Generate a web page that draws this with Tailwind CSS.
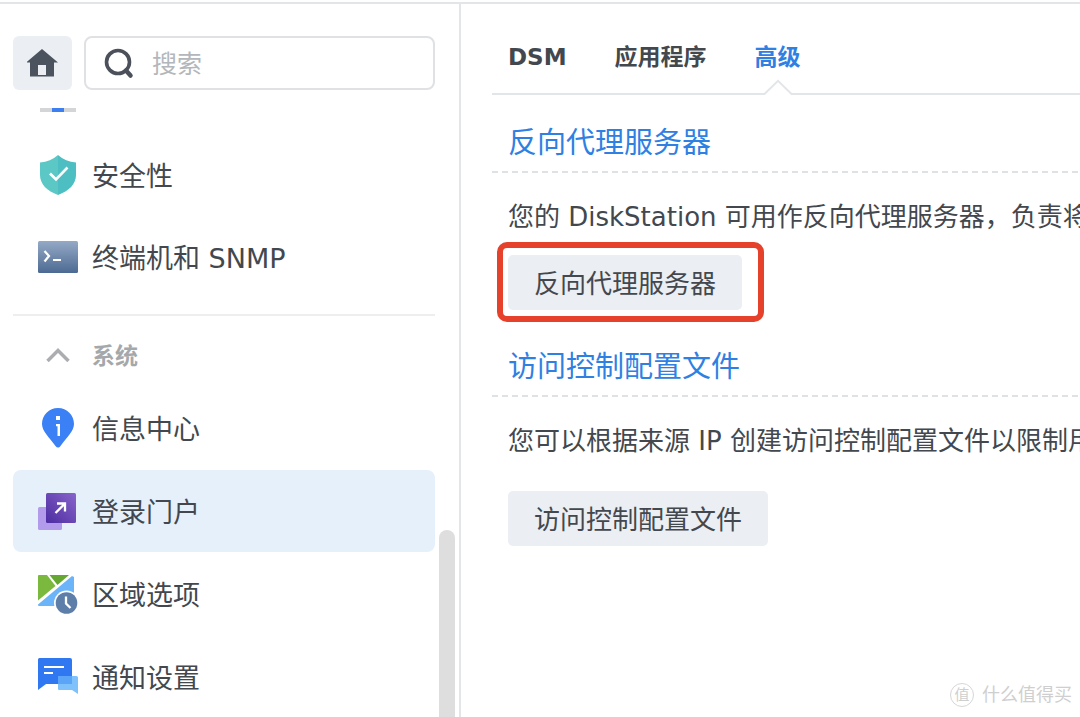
<!DOCTYPE html>
<html lang="zh-CN">
<head>
    <meta charset="UTF-8">
    <meta name="viewport" content="width=device-width, initial-scale=1.0">
    <title>控制面板 - 登录门户</title>
    <script src="https://cdn.jsdelivr.net/npm/@tailwindcss/browser@4"></script>
</head>
<body class="h-screen overflow-hidden bg-white pt-[2px] font-['DejaVu_Sans','Noto_Sans_CJK_SC',sans-serif] text-[#43484e]">
    <div class="flex h-full border-t-2 border-[#e3e6e9]">

        <!-- Sidebar -->
        <aside class="relative flex w-[461px] shrink-0 flex-col border-r-2 border-[#e3e6e9] pt-8 pr-6 pl-[13px]">
            <div class="flex gap-3">
                <button type="button" aria-label="主页" class="flex h-[54px] w-[59px] shrink-0 items-center justify-center rounded-md bg-[#ebeef2]">
                    <svg class="h-8 w-8" viewBox="0 0 32 32" fill="#4b535e">
                        <path d="M15 2 31 15.500H27V29.500H3V15.500H-1ZM11 18V28H19V18Z" fill-rule="evenodd"/>
                    </svg>
                </button>
                <label class="flex h-[54px] min-w-0 flex-1 items-center gap-4 rounded-lg border-2 border-[#dfe1e4] pr-4 pl-[18px]">
                    <svg class="h-8 w-8 shrink-0" viewBox="0 0 32 32" fill="none" stroke="#4b505b">
                        <circle cx="14" cy="15" r="11.5" stroke-width="3.6"/>
                        <path d="M22 23.5 26.500 28.5" stroke-width="4.5" stroke-linecap="round"/>
                    </svg>
                    <input type="search" aria-label="搜索" placeholder="搜索" class="w-full min-w-0 bg-transparent pt-1 text-[25px] leading-9 outline-none placeholder:text-[#b3b7bb]">
                </label>
            </div>

            <nav class="mt-[18px] min-h-0 flex-1 overflow-hidden text-[27px]">
                <svg class="ml-[27px] h-1 w-9" viewBox="0 0 36 4">
                    <path d="M0 0H36V4H0Z" fill="#d3d5d7"/>
                    <path d="M12 0H24V4H12Z" fill="#3b7ff0"/>
                </svg>
                <ul class="mt-[22px]">
                    <li>
                        <a href="#" class="flex h-[82px] items-center gap-[14px] rounded-lg pl-[25px]">
                            <svg class="h-10 w-10 shrink-0" viewBox="0 0 40 40">
                                <path d="M20 0C15 4.5 9 7 2 7.5V20C2 29 9 36 20 40Z" fill="#5cc8c6"/>
                                <path d="M20 0C25 4.5 31 7 38 7.5V20C38 29 31 36 20 40Z" fill="#4dbec1"/>
                                <path d="M12 18.5 18 24.5 29.5 12.5" fill="none" stroke="#fff" stroke-width="2.6"/>
                            </svg>
                            <span class="pt-1">安全性</span>
                        </a>
                    </li>
                    <li>
                        <a href="#" class="flex h-[82px] items-center gap-[14px] rounded-lg pl-[25px]">
                            <svg class="h-10 w-10 shrink-0" viewBox="0 0 40 40">
                                <defs>
                                    <linearGradient id="term" x1="0" y1="0" x2="0" y2="1">
                                        <stop offset="0" stop-color="#95a9c6"/>
                                        <stop offset="1" stop-color="#4c6a92"/>
                                    </linearGradient>
                                </defs>
                                <rect y="4" width="40" height="32" rx="1.5" fill="url(#term)"/>
                                <path d="M6.5 14 11 19 6.5 24.5M15 23H23" fill="none" stroke="#fff" stroke-width="2.2"/>
                            </svg>
                            <span class="pt-1">终端机和 SNMP</span>
                        </a>
                    </li>
                </ul>

                <div class="mt-4 border-t-2 border-[#eceef0] pt-4">
                    <button type="button" aria-expanded="true" class="flex h-12 w-full items-center gap-[14px] pl-[25px] text-[23px] font-bold text-[#a5a8ab]">
                        <svg class="h-10 w-10 shrink-0" viewBox="0 0 40 40" fill="none" stroke="#abadb0" stroke-width="3.5">
                            <path d="M9.5 25 20 14.500 30.5 25"/>
                        </svg>
                        系统
                    </button>
                </div>

                <ul class="mt-[7px] flex flex-col gap-px">
                    <li>
                        <a href="#" class="flex h-[82px] items-center gap-[14px] rounded-lg pl-[25px]">
                            <svg class="h-10 w-10 shrink-0" viewBox="0 0 40 40">
                                <path d="M20 0C29 0 36 7 36 16C36 23 29 29 22.5 38C21 40 19 40 17.5 38C11 29 4 23 4 16C4 7 11 0 20 0Z" fill="#3b80f5"/>
                                <path d="M18 8H22V12H18ZM18 16H22V28H19.5V18.3H18Z" fill="#fff"/>
                            </svg>
                            <span class="pt-1">信息中心</span>
                        </a>
                    </li>
                    <li>
                        <a href="#" aria-current="page" class="flex h-[82px] items-center gap-[14px] rounded-lg bg-[#e6f0fb] pl-[25px]">
                            <svg class="h-10 w-10 shrink-0" viewBox="0 0 40 40">
                                <defs>
                                    <linearGradient id="portal" x1="1" y1="0" x2="0" y2="1">
                                        <stop offset="0" stop-color="#8864cb"/>
                                        <stop offset="1" stop-color="#4c2da0"/>
                                    </linearGradient>
                                </defs>
                                <rect y="16" width="24" height="23" rx="1.5" fill="#b29bea"/>
                                <rect x="8" y="2" width="30" height="30" rx="1.5" fill="url(#portal)"/>
                                <path d="M17.5 22 27 12.5M19 12.5H27V20.5" fill="none" stroke="#fff" stroke-width="2.3"/>
                            </svg>
                            <span class="pt-1">登录门户</span>
                        </a>
                    </li>
                    <li>
                        <a href="#" class="flex h-[82px] items-center gap-[14px] rounded-lg pl-[25px]">
                            <svg class="h-10 w-10 shrink-0" viewBox="0 0 40 40">
                                <path d="M0 2Q0 1 1 1H9L17.5 12 0 26.5Z" fill="#7ab93d"/>
                                <path d="M11.5 1H31L19.5 11Z" fill="#64a832"/>
                                <path d="M36 3V32H1Q0 32 0 31V30.5L34 2Z" fill="#6cb4fa"/>
                                <circle cx="28.5" cy="29" r="12.5" fill="#fff"/>
                                <circle cx="28.5" cy="29" r="10.8" fill="#5d7ea9"/>
                                <path d="M28 22.5V29.5L32.5 34" fill="none" stroke="#fff" stroke-width="2.3"/>
                            </svg>
                            <span class="pt-1">区域选项</span>
                        </a>
                    </li>
                    <li>
                        <a href="#" class="flex h-[82px] items-center gap-[14px] rounded-lg pl-[25px]">
                            <svg class="h-10 w-10 shrink-0" viewBox="0 0 40 40">
                                <path d="M1.5 1H32Q34 1 34 3V27H8L0 33V2.5Q0 1 1.5 1Z" fill="#2f78f2"/>
                                <path d="M21 19H38.5Q40 19 40 20.5V37L34 33H21Q20 33 20 32V20Q20 19 21 19Z" fill="#7fc2fb"/>
                                <path d="M20 19H34V27H20Z" fill="#5aa5f7"/>
                                <path d="M6 10H26M6 16H15" stroke="#fff" stroke-width="2"/>
                            </svg>
                            <span class="pt-1">通知设置</span>
                        </a>
                    </li>
                </ul>
            </nav>

            <!-- Scrollbar thumb -->
            <div class="absolute right-1 bottom-0 h-[187px] w-4 rounded-t-full bg-[#dedede]"></div>
        </aside>

        <!-- Login portal -->
        <main class="min-w-0 flex-1 overflow-hidden pl-[31px]">
            <div role="tablist" class="flex h-[91px] items-end gap-12 border-b-2 border-[#e3e6e9] pl-4 text-[23px] leading-8 font-bold">
                <button type="button" role="tab" aria-selected="false" class="pb-5">DSM</button>
                <button type="button" role="tab" aria-selected="false" class="pb-5">应用程序</button>
                <button type="button" role="tab" aria-selected="true" class="relative pb-5 text-[#2f80e3]">
                    高级
                    <!-- Notch over the tab line -->
                    <svg class="absolute -bottom-[2px] left-1/2 h-4 w-8 -translate-x-1/2" viewBox="0 0 32 16">
                        <path d="M2 16V15L16 2 30 15V16Z" fill="#fff"/>
                        <path d="M0 15H2.500L16 1.800 29.500 15H32" fill="none" stroke="#e3e6e9" stroke-width="2"/>
                    </svg>
                </button>
            </div>

            <section class="mt-5">
                <h2 class="pl-4 text-[29px] leading-[56px] text-[#2f80e3]">反向代理服务器</h2>
                <div class="h-[2px] bg-[repeating-linear-gradient(90deg,#dfe2e5_0px,#dfe2e5_6px,#ffffff_6px,#ffffff_10px)]"></div>
                <p class="mt-6 pl-4 text-[26px] leading-10 whitespace-nowrap">您的 DiskStation 可用作反向代理服务器，负责将</p>
                <div class="mt-[5px] ml-[5px] flex w-fit rounded-[10px] border-[6px] border-[#e5412b] pt-[7px] pr-4 pb-[6px] pl-[5px]">
                    <button type="button" class="h-[55px] rounded-[5px] bg-[#ebeef2] px-[26px] pt-[3px] text-[26px]">反向代理服务器</button>
                </div>
            </section>

            <section class="mt-[17px]">
                <h2 class="pl-4 text-[29px] leading-[56px] text-[#2f80e3]">访问控制配置文件</h2>
                <div class="h-[2px] bg-[repeating-linear-gradient(90deg,#dfe2e5_0px,#dfe2e5_6px,#ffffff_6px,#ffffff_10px)]"></div>
                <p class="mt-6 pl-4 text-[26px] leading-10 whitespace-nowrap">您可以根据来源 IP 创建访问控制配置文件以限制用</p>
                <button type="button" class="mt-[30px] ml-4 h-[55px] rounded-[5px] bg-[#ebeef2] px-[26px] pt-[3px] text-[26px]">访问控制配置文件</button>
            </section>
        </main>
    </div>

    <!-- Watermark -->
    <div class="absolute right-2 bottom-2 flex items-center gap-2 text-[18px] leading-7 text-[#cfcfcf]">
        <span class="flex h-6 w-6 items-center justify-center rounded-full border border-[#d6d6d6] text-[15px]">值</span>
        什么值得买
    </div>
</body>
</html>
